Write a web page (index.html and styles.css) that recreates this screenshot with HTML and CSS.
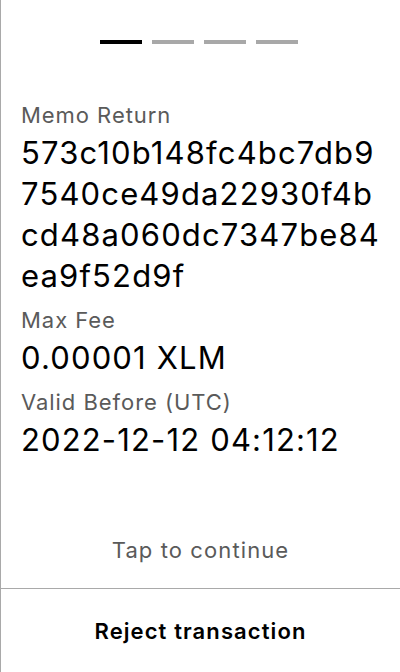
FILE: index.html
```html
<!DOCTYPE html>
<html>
<head>
<meta charset="utf-8">
<link rel="stylesheet" href="styles.css">
</head>
<body>
<div class="screen">
  <div class="main">
    <div class="steps">
      <span class="step active"></span>
      <span class="step"></span>
      <span class="step"></span>
      <span class="step"></span>
    </div>
    <div class="fields">
      <div class="label">Memo Return</div>
      <div class="value">573c10b148fc4bc7db9<br>7540ce49da22930f4b<br>cd48a060dc7347be84<br>ea9f52d9f</div>
      <div class="label">Max Fee</div>
      <div class="value">0.00001 XLM</div>
      <div class="label">Valid Before (UTC)</div>
      <div class="value">2022-12-12 04:12:12</div>
    </div>
    <div class="tap">Tap to continue</div>
  </div>
  <div class="footer">Reject transaction</div>
</div>
</body>
</html>
```
FILE: styles.css
```css
html, body {
  margin: 0;
  padding: 0;
  background: #fff;
}
body {
  font-family: Inter, "Noto Sans", sans-serif;
  color: #000;
}
.screen {
  width: 399px;
  height: 672px;
  border-left: 1px solid #a9a9a9;
  display: flex;
  flex-direction: column;
}
.main {
  flex: 1;
  display: flex;
  flex-direction: column;
}
.steps {
  display: flex;
  justify-content: center;
  gap: 10px;
  padding-top: 40px;
  padding-right: 3px;
}
.step {
  width: 42px;
  height: 4px;
  background: #a8a8a8;
}
.step.active {
  background: #000;
}
.fields {
  padding: 0 20px;
  margin-top: 54px;
}
.label {
  font-size: 22px;
  line-height: 34px;
  letter-spacing: 0.95px;
  color: #5a5a5a;
}
.value {
  font-size: 31px;
  line-height: 41px;
  letter-spacing: 1.15px;
  white-space: nowrap;
  margin-bottom: 7px;
}
.tap {
  margin-top: auto;
  text-align: center;
  font-size: 22px;
  line-height: 30px;
  letter-spacing: 1.1px;
  color: #5a5a5a;
  padding-bottom: 23px;
}
.footer {
  border-top: 1px solid #a9a9a9;
  height: 83px;
  display: flex;
  align-items: center;
  justify-content: center;
  font-size: 22px;
  letter-spacing: 1.1px;
  font-weight: 600;
}
```
